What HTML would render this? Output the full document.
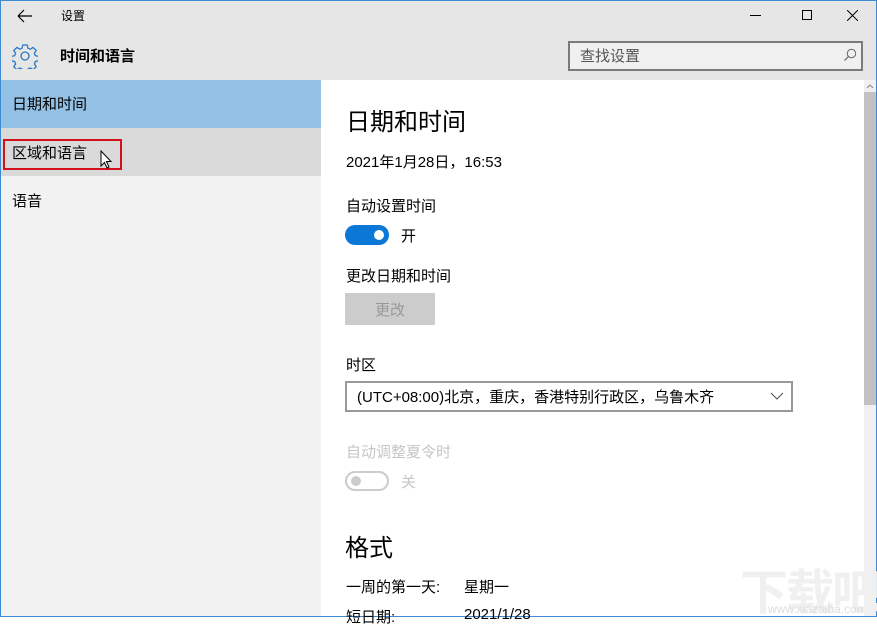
<!DOCTYPE html>
<html><head><meta charset="utf-8"><style>
*{margin:0;padding:0;box-sizing:border-box}
body{width:877px;height:617px;overflow:hidden;background:#fff;font-family:"Liberation Sans","Noto Sans CJK SC",sans-serif;color:#000;position:relative}
.a{position:absolute;white-space:nowrap}
</style></head><body>
<div class="a" style="left:0;top:0;width:877px;height:80px;background:#e6e6e6"></div>
<div class="a" style="left:0;top:0;width:877px;height:1px;background:#3d8ad0"></div>
<div class="a" style="left:0;top:0;width:1px;height:617px;background:#3d8ad0"></div>
<div class="a" style="left:876px;top:0;width:1px;height:617px;background:#3d8ad0"></div>
<div class="a" style="left:0;top:616px;width:877px;height:1px;background:#3d8ad0"></div>
<svg class="a" style="left:17px;top:9px" width="16" height="14" viewBox="0 0 16 14"><path d="M1 7H15M1 7L7 1M1 7L7 13" stroke="#000" stroke-width="1.2" fill="none"/></svg>
<div class="a" style="left:61px;top:7px;font-size:12px">设置</div>
<div class="a" style="left:750px;top:15px;width:11px;height:1px;background:#000"></div>
<div class="a" style="left:802px;top:10px;width:10px;height:10px;border:1px solid #000"></div>
<svg class="a" style="left:847px;top:10px" width="11" height="11"><path d="M0 0L11 11M11 0L0 11" stroke="#000" stroke-width="1"/></svg>
<svg class="a" style="left:12px;top:43px" width="26" height="26" viewBox="-13 -13 26 26"><g fill="none" stroke="#2b78c6" stroke-width="1.3"><path d="M-2.2-11h4.4l.7 3.2 2.4 1 2.8-1.8 3.1 3.1-1.8 2.8 1 2.4 3.2.7v4.4l-3.2.7-1 2.4 1.8 2.8-3.1 3.1-2.8-1.8-2.4 1-.7 3.2h-4.4l-.7-3.2-2.4-1-2.8 1.8-3.1-3.1 1.8-2.8-1-2.4-3.2-.7v-4.4l3.2-.7 1-2.4-1.8-2.8 3.1-3.1 2.8 1.8 2.4-1z"/><circle r="4"/></g></svg>
<div class="a" style="left:60px;top:45px;font-size:15px;font-weight:bold">时间和语言</div>
<div class="a" style="left:568px;top:41px;width:295px;height:30px;border:2px solid #7a7a7a;background:#f0f0f0"></div>
<div class="a" style="left:580px;top:45px;font-size:15px;color:#555">查找设置</div>
<svg class="a" style="left:843px;top:48px" width="14" height="14"><circle cx="8.5" cy="5.5" r="4.2" fill="none" stroke="#666" stroke-width="1"/><path d="M5.5 8.5L1.5 12.5" stroke="#666" stroke-width="1.2"/></svg>
<div class="a" style="left:1px;top:80px;width:320px;height:536px;background:#f2f2f2"></div>
<div class="a" style="left:1px;top:80px;width:320px;height:48px;background:#93c1e6"></div>
<div class="a" style="left:1px;top:128px;width:320px;height:48px;background:#dadada"></div>
<div class="a" style="left:12px;top:93px;font-size:15px">日期和时间</div>
<div class="a" style="left:12px;top:142px;font-size:15px">区域和语言</div>
<div class="a" style="left:3px;top:139px;width:119px;height:31px;border:2px solid #d4101d"></div>
<svg class="a" style="left:100px;top:150px" width="14" height="20"><path d="M1 1V16L4.5 12.5L7 18L9 17L6.5 11.5H11Z" fill="#fff" stroke="#000" stroke-width="1"/></svg>
<div class="a" style="left:12px;top:190px;font-size:15px">语音</div>
<div class="a" style="left:346px;top:102px;font-size:24px">日期和时间</div>
<div class="a" style="left:346px;top:151px;font-size:15px">2021年1月28日，16:53</div>
<div class="a" style="left:346px;top:195px;font-size:15px">自动设置时间</div>
<div class="a" style="left:345px;top:225px;width:44px;height:20px;border-radius:10px;background:#0b78d7"></div>
<div class="a" style="left:374px;top:230px;width:10px;height:10px;border-radius:5px;background:#fff"></div>
<div class="a" style="left:401px;top:225px;font-size:15px">开</div>
<div class="a" style="left:346px;top:265px;font-size:15px">更改日期和时间</div>
<div class="a" style="left:345px;top:293px;width:90px;height:32px;background:#cccccc"></div>
<div class="a" style="left:375px;top:299px;font-size:15px;color:#999">更改</div>
<div class="a" style="left:346px;top:354px;font-size:15px">时区</div>
<div class="a" style="left:345px;top:381px;width:448px;height:31px;border:2px solid #999;background:#fff"></div>
<div class="a" style="left:357px;top:386px;font-size:15px">(UTC+08:00)北京，重庆，香港特别行政区，乌鲁木齐</div>
<svg class="a" style="left:770px;top:392px" width="14" height="9"><path d="M1 1L7 7L13 1" fill="none" stroke="#555" stroke-width="1.1"/></svg>
<div class="a" style="left:346px;top:441px;font-size:15px;color:#c6c6c6">自动调整夏令时</div>
<div class="a" style="left:345px;top:471px;width:44px;height:20px;border-radius:10px;border:2px solid #ccc"></div>
<div class="a" style="left:351px;top:476px;width:10px;height:10px;border-radius:5px;background:#ccc"></div>
<div class="a" style="left:401px;top:471px;font-size:15px;color:#c6c6c6">关</div>
<div class="a" style="left:345px;top:528px;font-size:24px">格式</div>
<div class="a" style="left:346px;top:576px;font-size:15px">一周的第一天:</div>
<div class="a" style="left:464px;top:576px;font-size:15px">星期一</div>
<div class="a" style="left:346px;top:606px;font-size:15px">短日期:</div>
<div class="a" style="left:464px;top:606px;font-size:15px">2021/1/28</div>
<div class="a" style="left:740px;top:553px;font-size:48px;color:#f0f0f0;font-weight:bold;letter-spacing:-2px">下载吧</div>
<div class="a" style="left:768px;top:602px;font-size:12px;color:#ddd">www.xiazaiba.com</div>
<div class="a" style="left:864px;top:80px;width:12px;height:536px;background:#f0f0f0"></div>
<div class="a" style="left:864px;top:92px;width:12px;height:313px;background:#c2c2c2"></div>
<svg class="a" style="left:866px;top:83px" width="8" height="6"><path d="M1 5L4 2L7 5" fill="none" stroke="#888" stroke-width="1"/></svg>
</body></html>
